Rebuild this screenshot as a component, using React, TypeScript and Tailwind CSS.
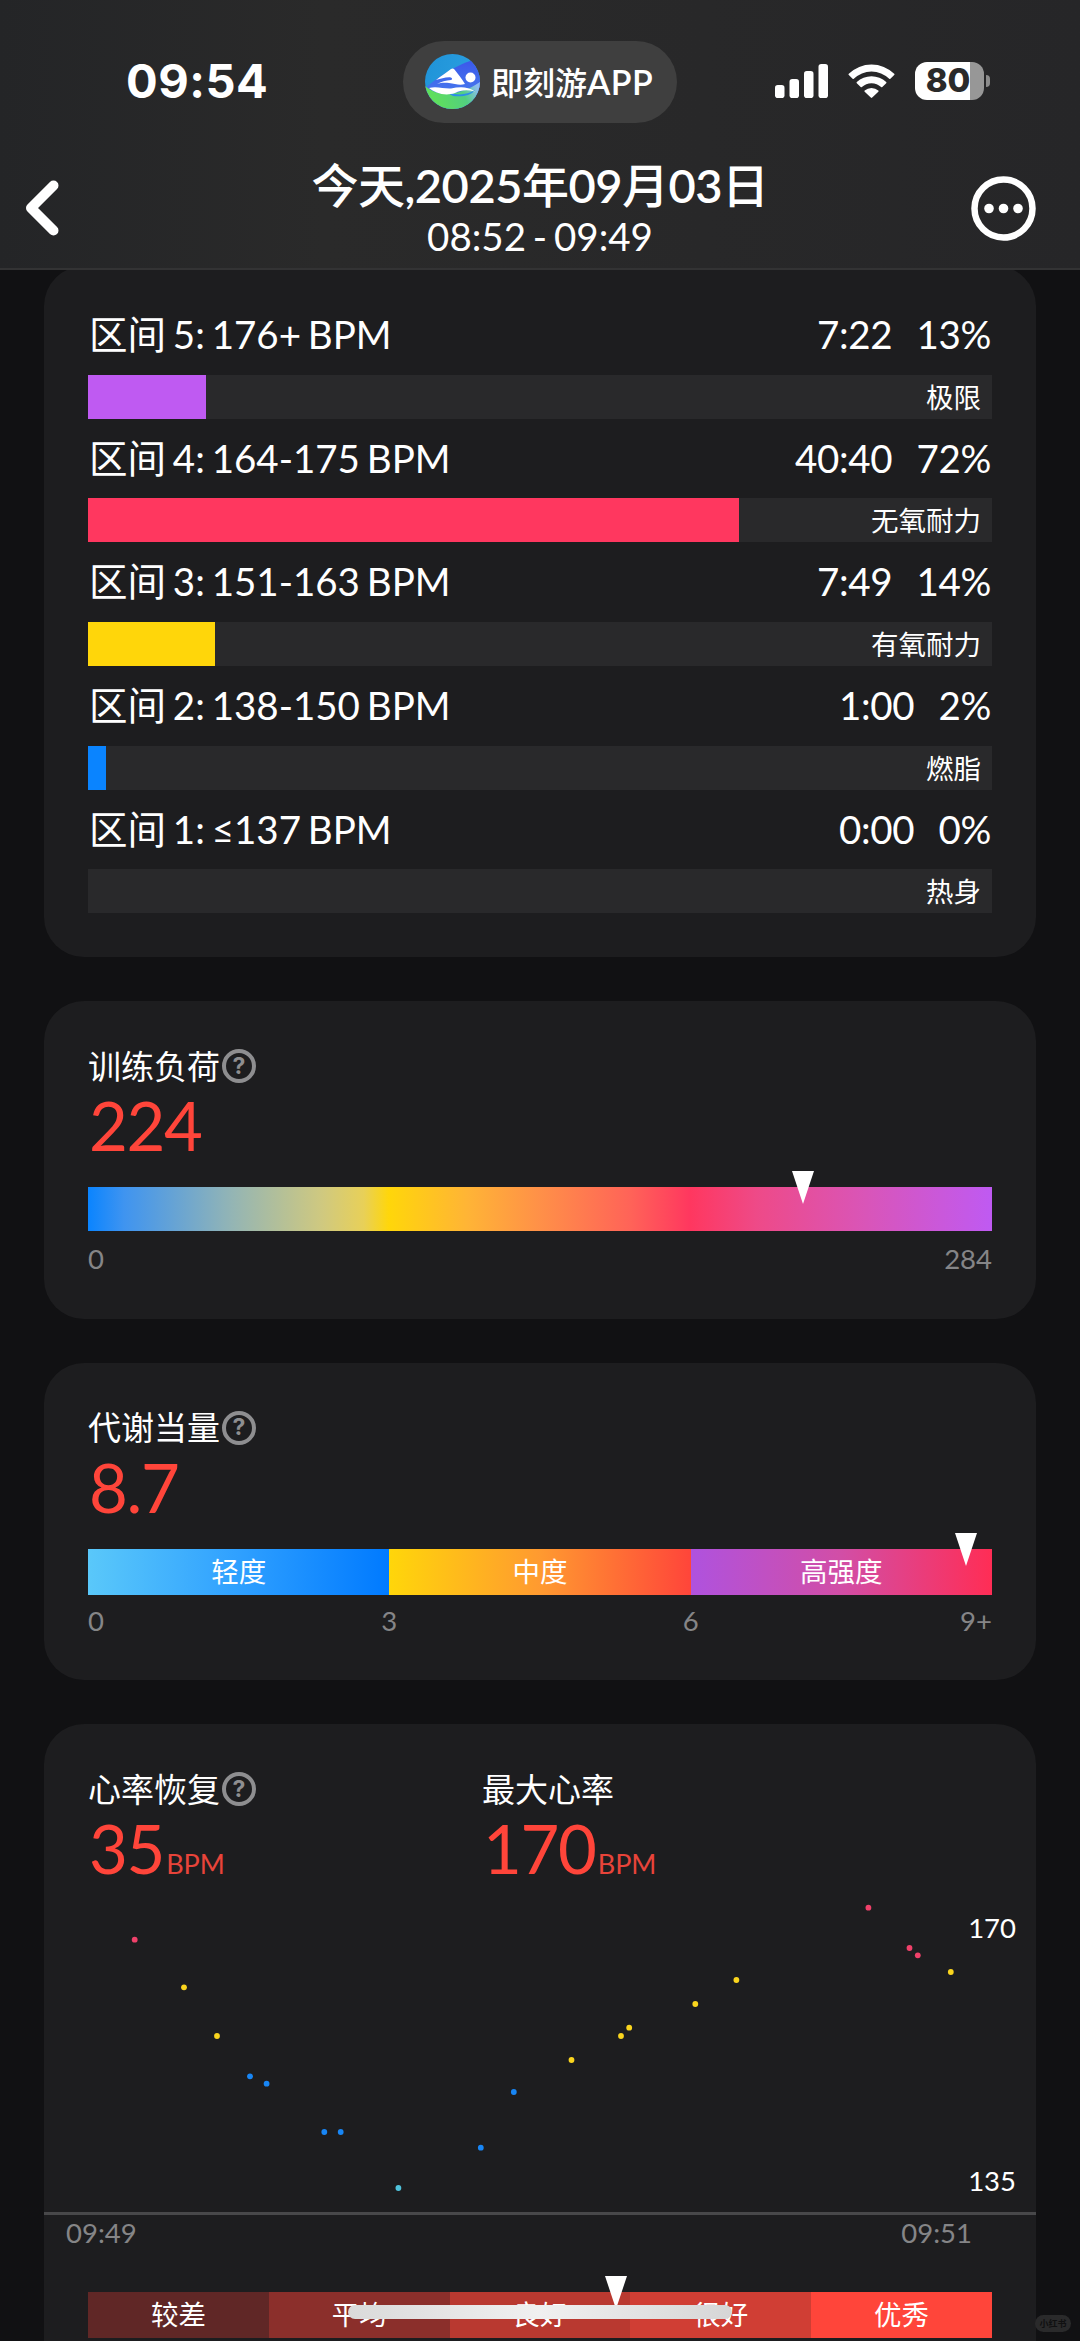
import type { ReactNode } from "react";

const zones = [
  { label: "区间 5: 176+ BPM", time: "7:22", percent: 13, name: "极限", color: "bg-[#bf5af2]" },
  { label: "区间 4: 164-175 BPM", time: "40:40", percent: 72, name: "无氧耐力", color: "bg-[#ff375f]" },
  { label: "区间 3: 151-163 BPM", time: "7:49", percent: 14, name: "有氧耐力", color: "bg-[#ffd60a]" },
  { label: "区间 2: 138-150 BPM", time: "1:00", percent: 2, name: "燃脂", color: "bg-[#0a84ff]" },
  { label: "区间 1: ≤137 BPM", time: "0:00", percent: 0, name: "热身", color: "bg-[#64d2ff]" },
];

const PINK = "#f0416a";
const YELLOW = "#fad51e";
const BLUE = "#1886f5";
const CYAN = "#4fc3dc";

// heart rate samples, in chart pixels
const samples: [number, number, string][] = [
  [90.7, 52.7, PINK],
  [140, 100.3, YELLOW],
  [173, 149, YELLOW],
  [206, 189.3, BLUE],
  [222.6, 196.7, BLUE],
  [280.3, 245, BLUE],
  [296.7, 245, BLUE],
  [354.4, 301, CYAN],
  [436.8, 260.7, BLUE],
  [469.8, 205, BLUE],
  [527.5, 173, YELLOW],
  [577, 149, YELLOW],
  [585.2, 140.7, YELLOW],
  [651.3, 117, YELLOW],
  [692.4, 93, YELLOW],
  [824.4, 20.7, PINK],
  [865.5, 61, PINK],
  [873.8, 68.3, PINK],
  [906.8, 85, YELLOW],
];

const levels = [
  { name: "较差", color: "bg-[#602726]" },
  { name: "平均", color: "bg-[#8b2f2b]" },
  { name: "良好", color: "bg-[#b93930]" },
  { name: "很好", color: "bg-[#d03e34]" },
  { name: "优秀", color: "bg-[#ff453a]" },
];

function SwimLogo() {
  return (
    <svg viewBox="0 0 55 55" className="h-[55px] w-[55px]">
      <defs>
        <clipPath id="logo-clip">
          <circle cx="27.5" cy="27.5" r="27.5" />
        </clipPath>
        <linearGradient id="logo-sky" x1="0" y1="0" x2="1" y2="0.3">
          <stop offset="0" stopColor="#1f93d8" />
          <stop offset="1" stopColor="#2b9fe0" />
        </linearGradient>
        <linearGradient id="logo-blue" x1="0" y1="0" x2="0" y2="1">
          <stop offset="0" stopColor="#3b56ea" />
          <stop offset="1" stopColor="#4a86ee" />
        </linearGradient>
        <linearGradient id="logo-green" x1="0" y1="0" x2="1" y2="-0.25">
          <stop offset="0" stopColor="#5fdf5c" />
          <stop offset="0.55" stopColor="#52cf80" />
          <stop offset="0.85" stopColor="#8dbdf0" />
          <stop offset="1" stopColor="#8fb2f5" />
        </linearGradient>
      </defs>
      <g clipPath="url(#logo-clip)">
        <rect width="55" height="55" fill="url(#logo-sky)" />
        <path d="M0 34 C10 26 30 10 55 4 V55 H0Z" fill="url(#logo-blue)" />
        <path d="M0 32 C14 44 34 42 55 28 V55 H0Z" fill="url(#logo-green)" />
        <path d="M16 35 C28 42 40 42 50 36 C46 42 36 43 28 42Z" fill="#2c8de8" />
      </g>
      <path
        d="M11 26 C16 22 22 18 26 15 Q28 14 29.500 15.500 C33 20 37 25 40 30 C35 31.500 30 30 24 29 C19 28.500 15 29 12 30 C16 27.500 21 26.500 26 26 C28 25 27 23.500 25 23.200 C20 23 16 24.500 11 26Z"
        fill="#fff"
      />
      <circle cx="45.500" cy="23.500" r="5" fill="#fff" />
      <path
        d="M4 34 C12 32 19 35 26 34.500 C34 33 42 32 50 37.500 C42 35.500 36 36 30 39 C20 42.500 10 39 4 34Z"
        fill="#fff"
      />
    </svg>
  );
}

function StatusBar() {
  return (
    <div className="flex h-[163px] items-center">
      <div className="w-[403px] pb-[2px] pl-[126px] font-['Inter',sans-serif] text-[47px] font-bold leading-none tracking-[0.5px]">09:54</div>
      <div className="flex h-[82px] w-[274px] items-center gap-[11px] rounded-full bg-[#3f3f3f] pl-[22px]">
        <SwimLogo />
        <span className="whitespace-nowrap text-[32px] font-medium leading-none">
          即刻游<span className="text-[34px] font-semibold tracking-[0.400px]">APP</span>
        </span>
      </div>
      <div className="ml-[98px] flex items-center pb-[2px]">
        <svg viewBox="0 0 53 34" className="mr-[20px] h-[34px] w-[53px]" fill="#fff">
          <rect x="0" y="21" width="9.500" height="13" rx="2.800" />
          <rect x="14.500" y="15" width="9.500" height="19" rx="2.800" />
          <rect x="29" y="7" width="9.500" height="27" rx="2.800" />
          <rect x="43.500" y="0" width="9.500" height="34" rx="2.800" />
        </svg>
        <svg viewBox="0 0 47 34" className="mr-[20px] h-[34px] w-[47px]" fill="#fff">
          <path d="M0.800 9.800 A32.500 32.500 0 0 1 46.200 9.800 Q46.800 10.400 46.200 11 L42.400 14.800 Q41.800 15.300 41.200 14.800 A25.300 25.300 0 0 0 5.800 14.800 Q5.200 15.300 4.600 14.800 L0.800 11 Q0.200 10.400 0.800 9.800Z" />
          <path d="M8.800 18 A21.500 21.500 0 0 1 38.200 18 Q38.800 18.600 38.200 19.200 L34.300 23 Q33.700 23.500 33.100 23 A14 14 0 0 0 13.900 23 Q13.300 23.500 12.700 23 L8.800 19.200 Q8.200 18.600 8.800 18Z" />
          <path d="M16.700 26.600 A10 10 0 0 1 30.300 26.600 Q30.900 27.200 30.300 27.800 L24.200 33.600 Q23.500 34.200 22.800 33.600 L16.700 27.800 Q16.100 27.200 16.700 26.600Z" />
        </svg>
        <div className="flex h-[38px] w-[69px] items-center justify-center rounded-[12px] bg-linear-to-r from-white from-80% to-[#979797] to-80% pr-[3px] font-['Inter',sans-serif] text-[33px] font-extrabold leading-none text-[#2a2a2a]">
          80
        </div>
        <div className="ml-[2px] h-[12px] w-[4px] rounded-r-full bg-[#8c8c8c]" />
      </div>
    </div>
  );
}

function Header() {
  return (
    <header className="relative z-10 h-[270px] shrink-0 border-b-2 border-[#333334] bg-linear-to-r from-[#242527] via-[#2a2a2a] via-30% to-[#262628]">
      <StatusBar />
      <div className="flex h-[90px] items-center pl-[25px] pr-[44px]">
        <svg viewBox="0 0 34 56" className="h-[56px] w-[34px]" fill="none" stroke="#fff" strokeWidth="10" strokeLinecap="round" strokeLinejoin="round">
          <path d="M28.500 5.500 L6 28 L28.500 50.500" />
        </svg>
        <div className="flex-1 pl-[50px] pt-[4px] text-center">
          <div className="text-[47px] font-medium leading-[52px] tracking-[-0.500px]">
            今天<span className="font-semibold">,2025</span>年<span className="font-semibold">09</span>月<span className="font-semibold">03</span>日
          </div>
          <div className="text-[38.500px] leading-[50px] [word-spacing:-3px]">08:52 - 09:49</div>
        </div>
        <svg viewBox="0 0 65 65" className="h-[65px] w-[65px]" fill="#fff">
          <circle cx="32.500" cy="32.500" r="29" fill="none" stroke="#fff" strokeWidth="6.500" />
          <circle cx="18" cy="32.500" r="4.800" />
          <circle cx="32.500" cy="32.500" r="4.800" />
          <circle cx="47" cy="32.500" r="4.800" />
        </svg>
      </div>
    </header>
  );
}

function HelpIcon() {
  return (
    <span className="ml-[2px] flex h-[34px] w-[34px] items-center justify-center rounded-full border-4 border-[#8e8e90] font-['Inter',sans-serif] text-[23px] font-bold leading-none text-[#8e8e90]">
      ?
    </span>
  );
}

function Metric({ title, value, unit, help = false }: { title: string; value: string; unit?: string; help?: boolean }) {
  return (
    <div>
      <div className="flex h-[44px] items-center">
        <span className="text-[33px] leading-none">{title}</span>
        {help && <HelpIcon />}
      </div>
      <div className="h-[76px] pl-px text-[67px] leading-[75px] tracking-[-1.300px] text-[#ff453a]">
        {value}
        {unit && <span className="ml-[2px] text-[27px] tracking-normal text-[#e8443a]">{unit}</span>}
      </div>
    </div>
  );
}

// little triangle that hangs over a bar, placed by percent
function Marker({ at }: { at: number }) {
  return (
    <svg viewBox="0 0 22 33" className="absolute -top-[16px] h-[33px] w-[22px] -translate-x-1/2" style={{ left: `${at}%` }}>
      <path d="M0 0H22L11 33Z" fill="#fff" />
    </svg>
  );
}

function Card({ children, className = "" }: { children: ReactNode; className?: string }) {
  return <section className={`shrink-0 rounded-[40px] bg-[#1d1d1f] ${className}`}>{children}</section>;
}

export default function App() {
  return (
    <div className="relative flex h-[2341px] w-[1080px] flex-col overflow-hidden bg-[#111113] font-['Lato','Noto_Sans_CJK_SC',sans-serif] text-white">
      <Header />

      <main className="-mt-[4px] flex flex-col gap-[44px] px-[44px]">
        {/* heart rate zones */}
        <Card className="h-[691px] px-[44px] pt-[29px]">
          {zones.map((zone) => (
            <div key={zone.label}>
              <div className="flex h-[79.700px] items-center justify-between pb-px text-[38.500px] leading-none">
                <span className="pl-px [word-spacing:-3px]">{zone.label}</span>
                <span className="flex gap-[24px] pr-px tracking-[-0.300px]">
                  <span>{zone.time}</span>
                  <span>{zone.percent}%</span>
                </span>
              </div>
              <div className="relative h-[44px] bg-[#29292b]">
                <div className={`h-full ${zone.color}`} style={{ width: `${zone.percent}%` }} />
                <span className="absolute right-[11px] top-0 text-[27.500px] leading-[46px]">{zone.name}</span>
              </div>
            </div>
          ))}
        </Card>

        {/* training load */}
        <Card className="h-[317.700px] px-[44px] pt-[43px]">
          <Metric title="训练负荷" value="224" help />
          <div className="relative mt-[23px] h-[44px] bg-[linear-gradient(90deg,#0a84ff_0%,#3f94f0_4%,#94b5b4_16%,#d0c97f_26%,#e8d058_30.5%,#ffd60a_33.3%,#ffb436_42%,#ff9048_50%,#ff6358_60%,#ff375f_66.6%,#ee4a88_74%,#d955b8_86%,#bf5af2_100%)]">
            <Marker at={79.1} />
          </div>
          <div className="flex justify-between text-[27.500px] leading-[56px] text-[#858587]">
            <span>0</span>
            <span>284</span>
          </div>
        </Card>

        {/* metabolic equivalent */}
        <Card className="h-[317.700px] px-[44px] pt-[43px]">
          <Metric title="代谢当量" value="8.7" help />
          <div className="relative mt-[23px] grid h-[44px] grid-cols-3 text-center text-[27.500px] leading-[46px]">
            <div className="bg-[linear-gradient(90deg,#5ac8fa,#2fa0ff_50%,#007aff)]">轻度</div>
            <div className="bg-[linear-gradient(90deg,#ffd60a,#ff9a30_50%,#ff453a)]">中度</div>
            <div className="bg-[linear-gradient(90deg,#af52de,#d24ea6_50%,#ff2d55)]">高强度</div>
            <Marker at={97.1} />
          </div>
          <div className="relative flex justify-between text-[27.500px] leading-[56px] text-[#858587]">
            <span>0</span>
            <span className="absolute left-1/3 -translate-x-1/2">3</span>
            <span className="absolute left-2/3 -translate-x-1/2">6</span>
            <span>9+</span>
          </div>
        </Card>

        {/* heart rate recovery */}
        <Card className="h-[700px] pt-[43px]">
          <div className="grid grid-cols-[394px_1fr] px-[44px]">
            <Metric title="心率恢复" value="35" unit="BPM" help />
            <Metric title="最大心率" value="170" unit="BPM" />
          </div>
          <div className="relative h-[328px] border-b-3 border-[#48484a]">
            <svg viewBox="0 0 992 325" className="h-[325px] w-[992px]">
              {samples.map(([x, y, color]) => (
                <circle key={`${x}-${y}`} cx={x} cy={y} r="2.900" fill={color} />
              ))}
            </svg>
            <span className="absolute right-[20px] top-[26px] text-[27.500px] leading-[30px]">170</span>
            <span className="absolute right-[20px] top-[279px] text-[27.500px] leading-[30px]">135</span>
          </div>
          <div className="flex justify-between pl-[22px] pr-[64px] text-[27.500px] leading-[36px] text-[#858587]">
            <span>09:49</span>
            <span>09:51</span>
          </div>
          <div className="relative mx-[44px] mt-[41px] grid h-[44px] grid-cols-5 text-center text-[27.500px] leading-[46px]">
            {levels.map((level) => (
              <div key={level.name} className={level.color}>
                {level.name}
              </div>
            ))}
            <Marker at={58.4} />
          </div>
        </Card>
      </main>

      {/* home indicator */}
      <div className="absolute left-[348px] top-[2305px] h-[14px] w-[384px] rounded-full bg-linear-to-r from-[#dadada] via-[#f0f0f0] to-[#d6d6d6]" />
      <div className="absolute left-[1035px] top-[2315px] h-[17px] w-[36px] rounded-full bg-[#2a2a2b] text-center text-[9px] font-bold leading-[17px] text-[#101011]">小红书</div>
    </div>
  );
}
